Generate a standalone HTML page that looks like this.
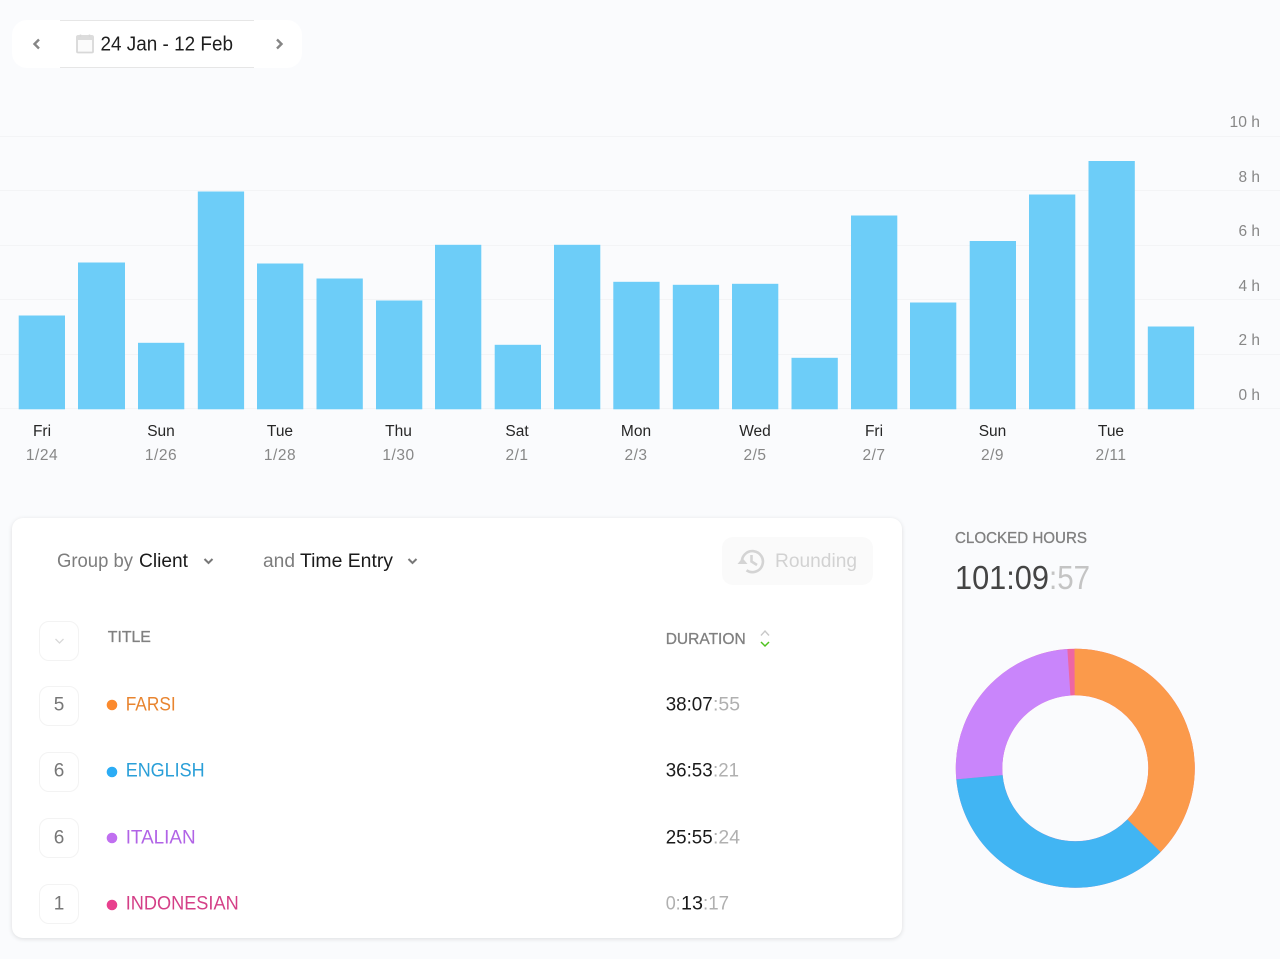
<!DOCTYPE html>
<html><head><meta charset="utf-8"><style>
html,body{margin:0;padding:0;background:#fafbfd;}
body{width:1280px;height:959px;overflow:hidden;position:relative;}
.a{position:absolute;box-sizing:border-box;}
.n{left:39px;width:40px;height:39.500px;border:1.5px solid #f3f3f3;border-radius:10px;background:#fff;}
svg{position:absolute;left:0;top:0;}
text{font-family:"Liberation Sans",sans-serif;}
</style></head><body>
<div class="a" style="left:12px;top:20px;width:290px;height:48px;background:#fff;border-radius:15px;"></div>
<div class="a" style="left:60px;top:20px;width:194px;height:48px;border-top:1.5px solid #e6e6e6;border-bottom:1.5px solid #e6e6e6;"></div>
<div class="a" style="left:12px;top:518px;width:890px;height:420px;background:#fff;border-radius:11px;box-shadow:0 1px 5px rgba(0,0,0,.12);"></div>
<div class="a" style="left:722px;top:537px;width:151px;height:48px;background:#fafafa;border-radius:11px;"></div>
<div class="a n" style="top:621px;"></div>
<div class="a n" style="top:686px;"></div>
<div class="a n" style="top:752px;"></div>
<div class="a n" style="top:818px;"></div>
<div class="a n" style="top:884px;"></div>
<svg width="1280" height="959" viewBox="0 0 1280 959">
<g stroke="#f3f4f6" stroke-width="1">
<path d="M0 136.5H1280M0 190.5H1280M0 245.5H1280M0 299.5H1280M0 354.5H1280M0 408.5H1280"/>
</g>
<g fill="#6dcdf8">
<rect x="18.700" y="315.500" width="46.300" height="93.800"/>
<rect x="78" y="262.500" width="47" height="146.800"/>
<rect x="138" y="342.800" width="46.300" height="66.500"/>
<rect x="197.800" y="191.500" width="46.300" height="217.800"/>
<rect x="257" y="263.500" width="46.300" height="145.800"/>
<rect x="316.500" y="278.500" width="46.300" height="130.800"/>
<rect x="376" y="300.500" width="46.300" height="108.800"/>
<rect x="435" y="244.800" width="46.300" height="164.500"/>
<rect x="494.700" y="344.800" width="46.300" height="64.500"/>
<rect x="554" y="244.800" width="46.300" height="164.500"/>
<rect x="613.300" y="281.800" width="46.300" height="127.500"/>
<rect x="672.800" y="284.800" width="46.300" height="124.500"/>
<rect x="732" y="283.800" width="46.300" height="125.500"/>
<rect x="791.500" y="357.800" width="46.300" height="51.500"/>
<rect x="851" y="215.500" width="46.300" height="193.800"/>
<rect x="910" y="302.500" width="46.300" height="106.800"/>
<rect x="969.700" y="241" width="46.300" height="168.300"/>
<rect x="1029" y="194.500" width="46.300" height="214.800"/>
<rect x="1088.500" y="161" width="46.300" height="248.300"/>
<rect x="1147.800" y="326.500" width="46.300" height="82.800"/>
</g>
<!-- nav icons -->
<path d="M39 39.500L34.500 44L39 48.500" fill="none" stroke="#858585" stroke-width="2.400"/>
<path d="M277 39.500L281.500 44L277 48.500" fill="none" stroke="#858585" stroke-width="2.400"/>
<rect x="77" y="36" width="16" height="16.500" rx="1" fill="#fbfbfb" stroke="#d8d8d8" stroke-width="1.800"/>
<rect x="77" y="36" width="16" height="4" fill="#dcdcdc"/>
<path d="M80.500 34.500V37M89.500 34.500V37" stroke="#d8d8d8" stroke-width="1.500"/>
<text x="100.500" y="50.500" font-size="20" fill="#1e1e1e" textLength="132.500" lengthAdjust="spacingAndGlyphs">24 Jan - 12 Feb</text>
<!-- y axis -->
<g font-size="15.500" fill="#878787" text-anchor="end">
<text x="1260" y="127" textLength="30.500" lengthAdjust="spacingAndGlyphs">10 h</text>
<text x="1260" y="182" textLength="21.500" lengthAdjust="spacingAndGlyphs">8 h</text>
<text x="1260" y="236" textLength="21.500" lengthAdjust="spacingAndGlyphs">6 h</text>
<text x="1260" y="291" textLength="21.500" lengthAdjust="spacingAndGlyphs">4 h</text>
<text x="1260" y="345" textLength="21.500" lengthAdjust="spacingAndGlyphs">2 h</text>
<text x="1260" y="400" textLength="21.500" lengthAdjust="spacingAndGlyphs">0 h</text>
</g>
<!-- x axis -->
<g font-size="15.500" fill="#262626" text-anchor="middle">
<text x="42" y="436">Fri</text>
<text x="161" y="436">Sun</text>
<text x="280" y="436">Tue</text>
<text x="398.500" y="436">Thu</text>
<text x="517" y="436">Sat</text>
<text x="636" y="436">Mon</text>
<text x="755" y="436">Wed</text>
<text x="874" y="436">Fri</text>
<text x="992.500" y="436">Sun</text>
<text x="1111" y="436">Tue</text>
</g>
<g font-size="15.500" fill="#878787" text-anchor="middle" letter-spacing=".5">
<text x="42" y="460">1/24</text>
<text x="161" y="460">1/26</text>
<text x="280" y="460">1/28</text>
<text x="398.500" y="460">1/30</text>
<text x="517" y="460">2/1</text>
<text x="636" y="460">2/3</text>
<text x="755" y="460">2/5</text>
<text x="874" y="460">2/7</text>
<text x="992.500" y="460">2/9</text>
<text x="1111" y="460">2/11</text>
</g>
<!-- toolbar -->
<g font-size="19">
<text x="57" y="567" fill="#7d7d7d" textLength="76" lengthAdjust="spacingAndGlyphs">Group by</text>
<text x="139" y="567" fill="#1a1a1a" textLength="49" lengthAdjust="spacingAndGlyphs">Client</text>
<text x="263" y="567" fill="#7d7d7d" textLength="32" lengthAdjust="spacingAndGlyphs">and</text>
<text x="300" y="567" fill="#1a1a1a" textLength="93" lengthAdjust="spacingAndGlyphs">Time Entry</text>
<text x="775" y="567" fill="#d2d2d2" textLength="82" lengthAdjust="spacingAndGlyphs">Rounding</text>
</g>
<path d="M204.500 559L208.500 563L212.500 559M408.500 559L412.500 563L416.500 559" fill="none" stroke="#777" stroke-width="2"/>
<!-- rounding icon -->
<g fill="none" stroke="#d4d4d4" stroke-width="2.600">
<path d="M742 563A10.500 10.500 0 1 1 746.500 570.300"/>
<path d="M751.500 555V561.500L757 565"/>
</g>
<path d="M737.500 564L742.500 558L747.500 564Z" fill="#d4d4d4"/>
<!-- header -->
<path d="M55.500 639L59.500 643L63.500 639" fill="none" stroke="#d8d8d8" stroke-width="1.300"/>
<g font-size="15.500" fill="#808080" stroke="#808080" stroke-width=".3">
<text x="107.800" y="642" textLength="43" lengthAdjust="spacingAndGlyphs">TITLE</text>
<text x="665.700" y="644" textLength="80" lengthAdjust="spacingAndGlyphs">DURATION</text>
</g>
<path d="M761 635.500L765 631L769 635.500" fill="none" stroke="#c8c8c8" stroke-width="1.400"/>
<path d="M761 642L765 646L769 642" fill="none" stroke="#4fc21e" stroke-width="1.500"/>
<!-- row numbers -->
<g font-size="19" fill="#777" text-anchor="middle">
<text x="59" y="710.500">5</text>
<text x="59" y="776.500">6</text>
<text x="59" y="843.500">6</text>
<text x="59" y="909.500">1</text>
</g>
<!-- rows -->
<circle cx="112" cy="705" r="5.300" fill="#fb8a2e"/>
<circle cx="112" cy="772" r="5.300" fill="#2bacf5"/>
<circle cx="112" cy="838" r="5.300" fill="#c06ff0"/>
<circle cx="112" cy="905" r="5.300" fill="#e8408e"/>
<g font-size="19">
<text x="125.700" y="710.500" fill="#e8842f" textLength="50" lengthAdjust="spacingAndGlyphs">FARSI</text>
<text x="125.700" y="776.500" fill="#2a9fd8" textLength="79" lengthAdjust="spacingAndGlyphs">ENGLISH</text>
<text x="125.700" y="843.500" fill="#b163e6" textLength="70" lengthAdjust="spacingAndGlyphs">ITALIAN</text>
<text x="125.700" y="909.500" fill="#d43f87" textLength="113" lengthAdjust="spacingAndGlyphs">INDONESIAN</text>
<text x="665.700" y="710.500" fill="#1a1a1a" textLength="47" lengthAdjust="spacingAndGlyphs">38:07</text>
<text x="713" y="710.500" fill="#b0b0b0" textLength="27" lengthAdjust="spacingAndGlyphs">:55</text>
<text x="665.700" y="776.500" fill="#1a1a1a" textLength="47" lengthAdjust="spacingAndGlyphs">36:53</text>
<text x="713" y="776.500" fill="#b0b0b0" textLength="26" lengthAdjust="spacingAndGlyphs">:21</text>
<text x="665.700" y="843.500" fill="#1a1a1a" textLength="47" lengthAdjust="spacingAndGlyphs">25:55</text>
<text x="713" y="843.500" fill="#b0b0b0" textLength="27" lengthAdjust="spacingAndGlyphs">:24</text>
<text x="665.700" y="909.500" fill="#b0b0b0" textLength="15" lengthAdjust="spacingAndGlyphs">0:</text>
<text x="681" y="909.500" fill="#1a1a1a" textLength="22" lengthAdjust="spacingAndGlyphs">13</text>
<text x="703" y="909.500" fill="#b0b0b0" textLength="26" lengthAdjust="spacingAndGlyphs">:17</text>
</g>
<!-- clocked -->
<text x="955" y="543" font-size="15.500" fill="#808080" stroke="#808080" stroke-width=".3" textLength="132" lengthAdjust="spacingAndGlyphs">CLOCKED HOURS</text>
<text x="955" y="589" font-size="33.500" fill="#444" textLength="94" lengthAdjust="spacingAndGlyphs">101:09</text>
<text x="1049" y="589" font-size="33.500" fill="#c4c4c4" textLength="41" lengthAdjust="spacingAndGlyphs">:57</text>
<!-- donut -->
<g transform="rotate(-90 1075.300 768.300)" fill="none" stroke-width="46.500">
<circle cx="1075.300" cy="768.300" r="96.250" pathLength="360" stroke="#ee66a3"/>
<circle cx="1075.300" cy="768.300" r="96.250" pathLength="360" stroke="#c985fb" stroke-dasharray="91.600 268.400" stroke-dashoffset="-265"/>
<circle cx="1075.300" cy="768.300" r="96.250" pathLength="360" stroke="#41b5f3" stroke-dasharray="130.400 229.600" stroke-dashoffset="-134.600"/>
<circle cx="1075.300" cy="768.300" r="96.250" pathLength="360" stroke="#fb9a4b" stroke-dasharray="134.600 225.400"/>
</g>
</svg>
</body></html>
